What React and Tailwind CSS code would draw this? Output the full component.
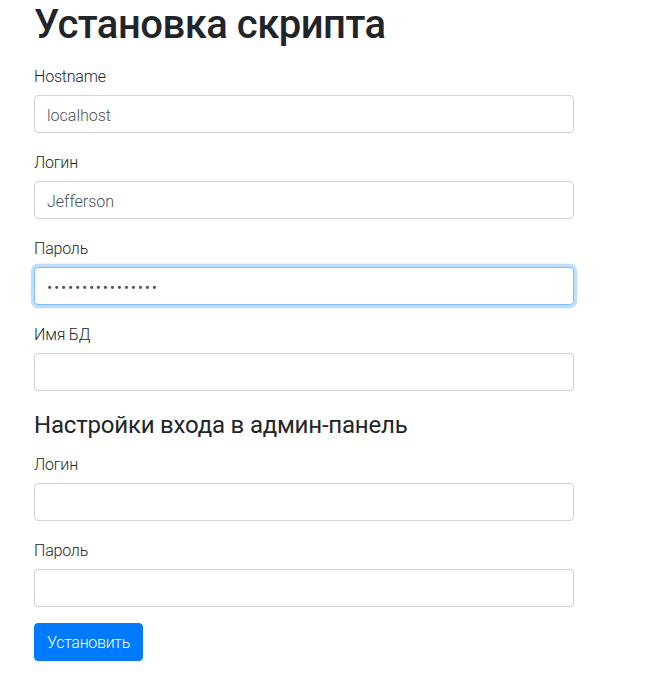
export default function App() {
  const font = { fontFamily: 'Roboto, "Noto Sans", sans-serif' };
  const Field = ({ label, value, type = "text", focus = false }) => (
    <div className="mb-4">
      <label className="block pt-[2px] mb-[6px] text-[16px] leading-6 text-[#212529] font-light tracking-[-0.2px]">{label}</label>
      <input
        type={type}
        defaultValue={value}
        className={
          "block w-full h-[38px] px-3 pt-[7px] pb-[5px] text-[16px] leading-6 text-[#495057] font-light bg-white rounded border outline-none " +
          (type === "password" ? "tracking-[1.8px] " : "") +
          (focus
            ? "border-[#80bdff] shadow-[0_0_0_3.2px_rgba(0,123,255,0.25)]"
            : "border-[#ced4da]")
        }
      />
    </div>
  );
  return (
    <div className="bg-white min-h-[698px] w-[660px]" style={font}>
      <div className="ml-[34px] w-[540px] pt-[1px]">
        <h1 className="text-[40px] leading-[48px] font-medium text-[#212529] mb-[14px] tracking-[-0.5px]">Установка скрипта</h1>
        <Field label="Hostname" value="localhost" />
        <Field label="Логин" value="Jefferson" />
        <Field label="Пароль" value="passwordpassword" type="password" focus />
        <Field label="Имя БД" value="" />
        <h3 className="text-[24px] leading-[36px] font-normal text-[#212529] mb-2 tracking-[-0.2px]">Настройки входа в админ-панель</h3>
        <Field label="Логин" value="" />
        <Field label="Пароль" value="" type="password" />
        <button className="h-[38px] px-3 pt-[1px] text-[16px] leading-6 font-light text-white bg-[#007bff] rounded border border-[#007bff] tracking-[-0.3px]">Установить</button>
      </div>
    </div>
  );
}
